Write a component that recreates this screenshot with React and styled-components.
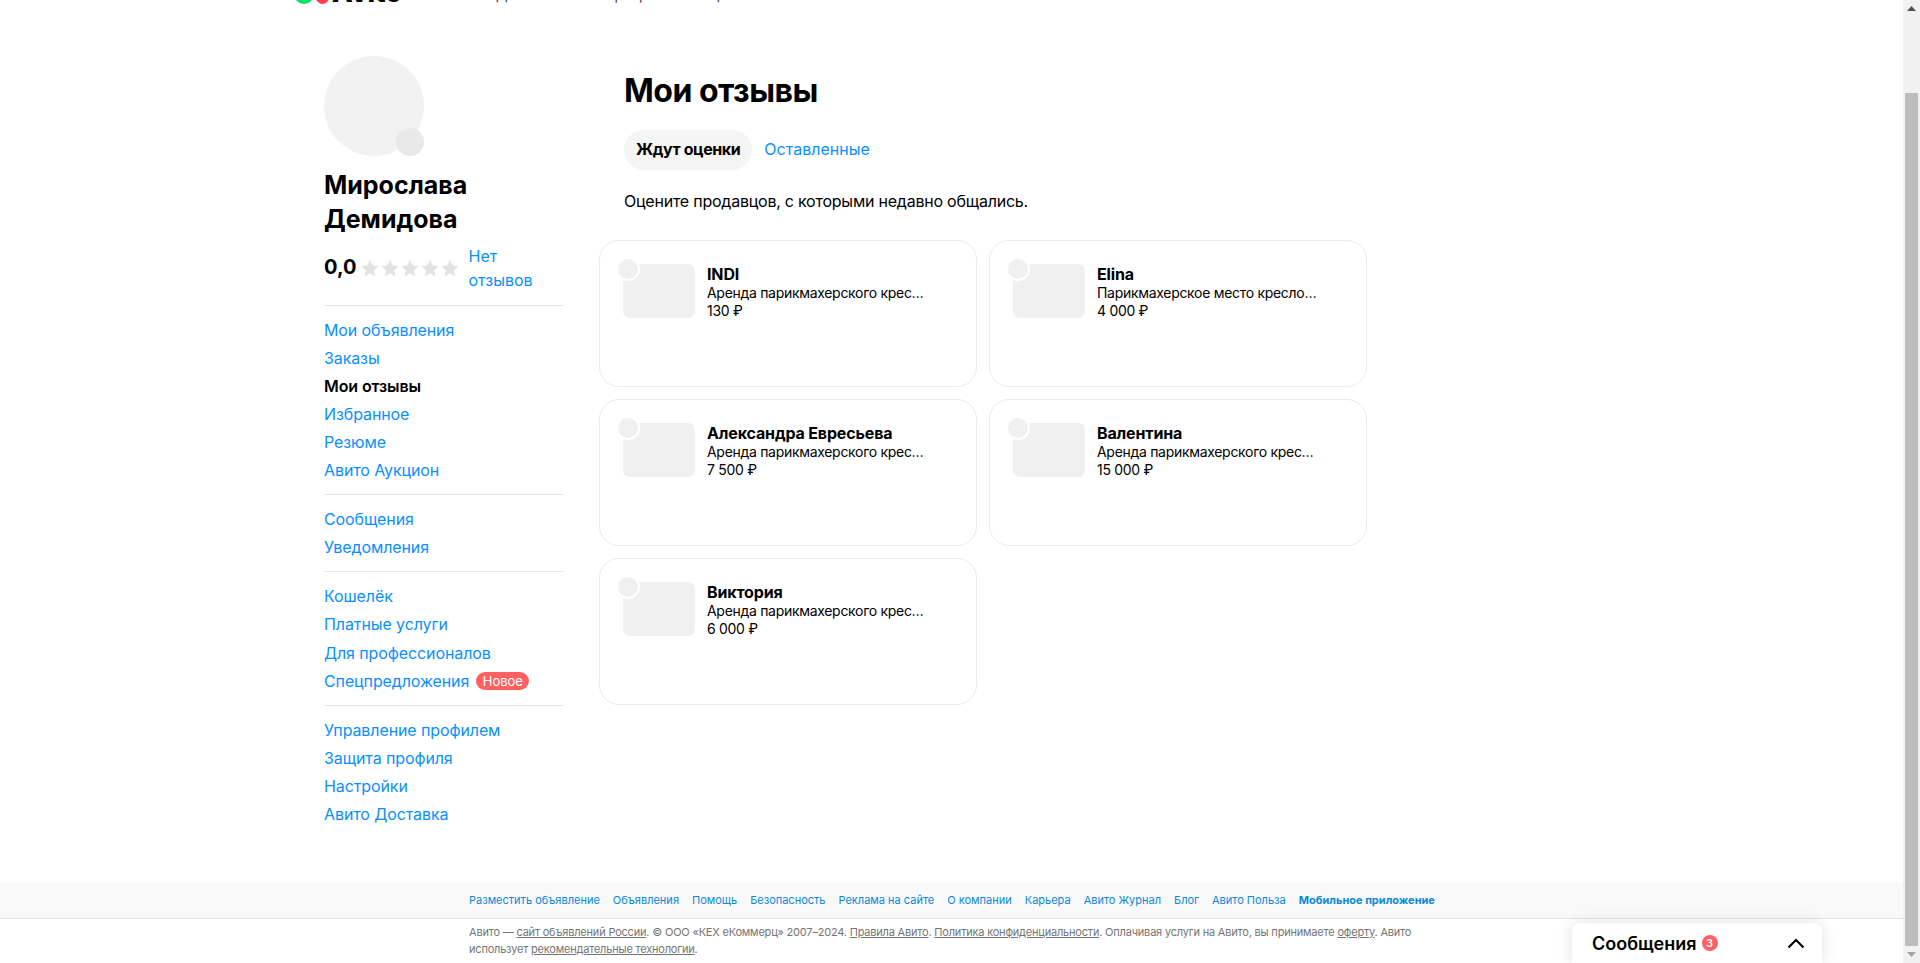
import React from 'react'
import styled, { createGlobalStyle } from 'styled-components'

const GlobalStyle = createGlobalStyle`
  html, body {
    margin: 0;
    padding: 0;
    height: 100%;
    overflow: hidden;
    background: #fff;
    font-family: Inter, "Noto Sans", "Liberation Sans", sans-serif;
    color: #000;
  }
`

const Screen = styled.div`
  position: relative;
  display: flex;
  height: 963px;
  overflow: hidden;
`

const Page = styled.div`
  flex: 1;
  min-width: 0;
`

const Header = styled.header`
  display: flex;
  align-items: flex-end;
  height: 40px;
  margin-top: -36px;
  padding-left: 294px;
`

const LogoDots = styled.div`
  display: flex;
  align-items: flex-end;
  gap: 2px;
  margin-right: 3px;
`

const LogoDot = styled.span`
  display: block;
  width: ${p => p.$size}px;
  height: ${p => p.$size}px;
  border-radius: 50%;
  background: ${p => p.$color};
`

const LogoText = styled.span`
  font-size: 27px;
  line-height: 28px;
  font-weight: 800;
  margin-bottom: -3px;
`

const HeaderNav = styled.nav`
  display: flex;
  gap: 14px;
  margin-left: 94px;
  margin-bottom: -1px;
  font-size: 14px;
  line-height: 20px;
  color: #444;
`

const Main = styled.main`
  display: flex;
  height: 826px;
  padding: 52px 0 0 324px;
`

const Sidebar = styled.aside`
  width: 240px;
  flex: none;
  margin-right: 60px;
`

const AvatarWrap = styled.div`
  position: relative;
  width: 100px;
  height: 100px;
  border-radius: 50%;
  background: #f2f2f2;
`

const AvatarBadge = styled.span`
  position: absolute;
  right: 0;
  bottom: 0;
  width: 28px;
  height: 28px;
  border-radius: 50%;
  background: #e9e9e9;
`

const UserName = styled.h2`
  margin: 12px 0 8px;
  font-size: 25px;
  line-height: 34px;
  font-weight: 700;
`

const RatingRow = styled.div`
  display: flex;
  align-items: center;
  height: 48px;
  margin-bottom: 13px;
`

const RatingValue = styled.span`
  font-size: 20px;
  line-height: 24px;
  font-weight: 700;
  margin: -2px 4px 0 0;
`

const Stars = styled.div`
  display: flex;
  margin-right: 8px;
`

const NoReviews = styled.a`
  width: 70px;
  font-size: 16px;
  line-height: 24px;
  color: #0a8fff;
`

const Divider = styled.hr`
  margin: 0;
  border: 0;
  border-top: 1px solid #e8e8e8;
`

const NavGroup = styled.ul`
  list-style: none;
  margin: 0;
  padding: 10px 0;
`

const NavItem = styled.li`
  display: flex;
  align-items: center;
  height: ${p => p.$height}px;
  font-size: 16px;
  letter-spacing: -0.1px;
  color: ${p => (p.$active ? '#000' : '#0a8fff')};
  font-weight: ${p => (p.$active ? 600 : 400)};
`

const NewBadge = styled.span`
  margin-left: 7px;
  height: 18px;
  padding: 0 6.5px;
  border-radius: 9px;
  background: #ff6163;
  color: #fff;
  font-size: 13px;
  line-height: 18px;
  letter-spacing: 0;
`

const Content = styled.section`
  flex: 1;
  padding-top: 15px;
`

const Title = styled.h1`
  margin: 0 0 19px;
  font-size: 32px;
  line-height: 40px;
  font-weight: 700;
  letter-spacing: -0.5px;
`

const Tabs = styled.div`
  display: flex;
  align-items: center;
  gap: 12px;
`

const Tab = styled.button`
  height: 40px;
  padding: ${p => (p.$active ? '0 12px 2px' : '0 0 2px')};
  border: 0;
  border-radius: 20px;
  font-family: inherit;
  font-size: 16px;
  font-weight: ${p => (p.$active ? 700 : 400)};
  letter-spacing: ${p => (p.$active ? '-0.4px' : '0')};
  color: ${p => (p.$active ? '#000' : '#0a8fff')};
  background: ${p => (p.$active ? '#f5f5f5' : 'transparent')};
`

const Description = styled.p`
  margin: 19px 0 27px;
  font-size: 16px;
  line-height: 24px;
  letter-spacing: -0.23px;
`

const CardGrid = styled.div`
  display: grid;
  grid-template-columns: 378px 378px;
  grid-auto-rows: 147px;
  gap: 12px;
  margin-left: -25px;
`

const Card = styled.article`
  display: flex;
  align-items: flex-start;
  gap: 12px;
  padding: 23px 24px 23px 23px;
  border: 1px solid #ebebeb;
  border-radius: 20px;
  box-sizing: border-box;
`

const Thumb = styled.div`
  position: relative;
  flex: none;
  width: 72px;
  height: 54px;
  border-radius: 7px;
  background: #f0f0f0;
`

const ThumbAvatar = styled.span`
  position: absolute;
  left: -5px;
  top: -5px;
  width: 20px;
  height: 20px;
  border-radius: 50%;
  background: #f0f0f0;
  box-shadow: 0 0 0 2px #fff;
`

const CardText = styled.div`
  min-width: 0;
  width: 220px;
  margin-top: 1px;
`

const CardName = styled.div`
  font-size: 16px;
  line-height: 19px;
  font-weight: 700;
  letter-spacing: -0.15px;
`

const CardLine = styled.div`
  font-size: 14px;
  line-height: 18px;
  letter-spacing: -0.3px;
  white-space: nowrap;
  overflow: hidden;
  text-overflow: ellipsis;
`

const FooterLinks = styled.nav`
  display: flex;
  align-items: center;
  gap: 13px;
  height: 36px;
  padding-left: 469px;
  background: #f9f9f9;
  border-bottom: 1px solid #e4e4e4;
  font-size: 11px;
  color: #0a88dd;
`

const FooterLink = styled.a`
  font-weight: ${p => (p.$bold ? 700 : 400)};
`

const Copyright = styled.p`
  width: 950px;
  margin: 5px 0 0 469px;
  font-size: 11px;
  line-height: 17px;
  letter-spacing: -0.2px;
  color: #757575;
`

const CopyLink = styled.a`
  text-decoration: underline;
`

const Scrollbar = styled.div`
  display: flex;
  flex-direction: column;
  align-items: center;
  flex: none;
  width: 17px;
  background: #f1f1f1;
`

const ScrollArrow = styled.div`
  height: 17px;
  flex: none;
  display: flex;
  align-items: center;
  justify-content: center;
`

const ScrollThumb = styled.div`
  flex: 1;
  width: 13px;
  margin-top: 76px;
  background: #bdbdbd;
`

const MessagesDock = styled.div`
  position: absolute;
  left: 1572px;
  bottom: 0;
  display: flex;
  align-items: center;
  width: 250px;
  height: 40px;
  padding: 0 17px 0 20px;
  box-sizing: border-box;
  border-radius: 8px 8px 0 0;
  background: #fff;
  box-shadow: 0 0 16px rgba(0, 0, 0, 0.12);
`

const DockTitle = styled.span`
  font-size: 18px;
  font-weight: 600;
`

const DockCount = styled.span`
  width: 16px;
  height: 16px;
  margin: 0 auto 0 5px;
  border-radius: 50%;
  background: #ff6163;
  color: #fff;
  font-size: 11px;
  font-weight: 600;
  line-height: 16px;
  text-align: center;
`

const Star = () => (
  <svg width="20" height="18" viewBox="0 0 20 18">
    <path d="M10 .8l2.6 5.6 6 .7-4.5 4.1 1.2 6-5.3-3-5.3 3 1.2-6L1.4 7.100l6-.7z" fill="#e2e2e2" />
  </svg>
)

const groups = [
  { height: 28, items: ['Мои объявления', 'Заказы', 'Мои отзывы', 'Избранное', 'Резюме', 'Авито Аукцион'] },
  { height: 28, items: ['Сообщения', 'Уведомления'] },
  { height: 28.25, items: ['Кошелёк', 'Платные услуги', 'Для профессионалов', 'Спецпредложения'] },
  { height: 28, items: ['Управление профилем', 'Защита профиля', 'Настройки', 'Авито Доставка'] },
]

const reviews = [
  { name: 'INDI', title: 'Аренда парикмахерского кресла в салоне', price: '130 ₽' },
  { name: 'Elina', title: 'Парикмахерское место кресло в аренду', price: '4 000 ₽' },
  { name: 'Александра Евресьева', title: 'Аренда парикмахерского кресла в салоне', price: '7 500 ₽' },
  { name: 'Валентина', title: 'Аренда парикмахерского кресла в салоне', price: '15 000 ₽' },
  { name: 'Виктория', title: 'Аренда парикмахерского кресла в салоне', price: '6 000 ₽' },
]

const footerLinks = [
  'Разместить объявление', 'Объявления', 'Помощь', 'Безопасность', 'Реклама на сайте',
  'О компании', 'Карьера', 'Авито Журнал', 'Блог', 'Авито Польза',
]

export default function App() {
  return (
    <Screen>
      <GlobalStyle />
      <Page>
        <Header>
          <LogoDots>
            <LogoDot $size={20} $color="#04e061" />
            <LogoDot $size={13} $color="#ff4053" />
          </LogoDots>
          <LogoText>Avito</LogoText>
          <HeaderNav>
            <span>Для бизнеса</span>
            <span>Карьера</span>
            <span>Помощь</span>
            <span>Каталоги</span>
          </HeaderNav>
        </Header>
        <Main>
          <Sidebar>
            <AvatarWrap>
              <AvatarBadge />
            </AvatarWrap>
            <UserName>Мирослава Демидова</UserName>
            <RatingRow>
              <RatingValue>0,0</RatingValue>
              <Stars>
                {[0, 1, 2, 3, 4].map(i => <Star key={i} />)}
              </Stars>
              <NoReviews>Нет отзывов</NoReviews>
            </RatingRow>
            {groups.map((group, i) => (
              <React.Fragment key={i}>
                <Divider />
                <NavGroup>
                  {group.items.map(item => (
                    <NavItem key={item} $height={group.height} $active={item === 'Мои отзывы'}>
                      {item}
                      {item === 'Спецпредложения' && <NewBadge>Новое</NewBadge>}
                    </NavItem>
                  ))}
                </NavGroup>
              </React.Fragment>
            ))}
          </Sidebar>
          <Content>
            <Title>Мои отзывы</Title>
            <Tabs>
              <Tab $active>Ждут оценки</Tab>
              <Tab>Оставленные</Tab>
            </Tabs>
            <Description>Оцените продавцов, с которыми недавно общались.</Description>
            <CardGrid>
              {reviews.map(r => (
                <Card key={r.name}>
                  <Thumb>
                    <ThumbAvatar />
                  </Thumb>
                  <CardText>
                    <CardName>{r.name}</CardName>
                    <CardLine>{r.title}</CardLine>
                    <CardLine>{r.price}</CardLine>
                  </CardText>
                </Card>
              ))}
            </CardGrid>
          </Content>
        </Main>
        <FooterLinks>
          {footerLinks.map(l => <FooterLink key={l}>{l}</FooterLink>)}
          <FooterLink $bold>Мобильное приложение</FooterLink>
        </FooterLinks>
        <Copyright>
          Авито — <CopyLink>сайт объявлений России</CopyLink>. © ООО «КЕХ еКоммерц» 2007–2024.{' '}
          <CopyLink>Правила Авито</CopyLink>. <CopyLink>Политика конфиденциальности</CopyLink>. Оплачивая услуги
          на Авито, вы принимаете <CopyLink>оферту</CopyLink>. Авито использует{' '}
          <CopyLink>рекомендательные технологии</CopyLink>.
        </Copyright>
      </Page>
      <Scrollbar>
        <ScrollArrow>
          <svg width="9" height="5" viewBox="0 0 9 5"><path d="M4.500 0L9 5H0z" fill="#505050" /></svg>
        </ScrollArrow>
        <ScrollThumb />
        <ScrollArrow>
          <svg width="9" height="5" viewBox="0 0 9 5"><path d="M0 0h9L4.500 5z" fill="#a3a3a3" /></svg>
        </ScrollArrow>
      </Scrollbar>
      <MessagesDock>
        <DockTitle>Сообщения</DockTitle>
        <DockCount>3</DockCount>
        <svg width="18" height="11" viewBox="0 0 18 11">
          <path d="M1.500 9.500L9 2l7.500 7.500" fill="none" stroke="#000" strokeWidth="2" />
        </svg>
      </MessagesDock>
    </Screen>
  )
}
